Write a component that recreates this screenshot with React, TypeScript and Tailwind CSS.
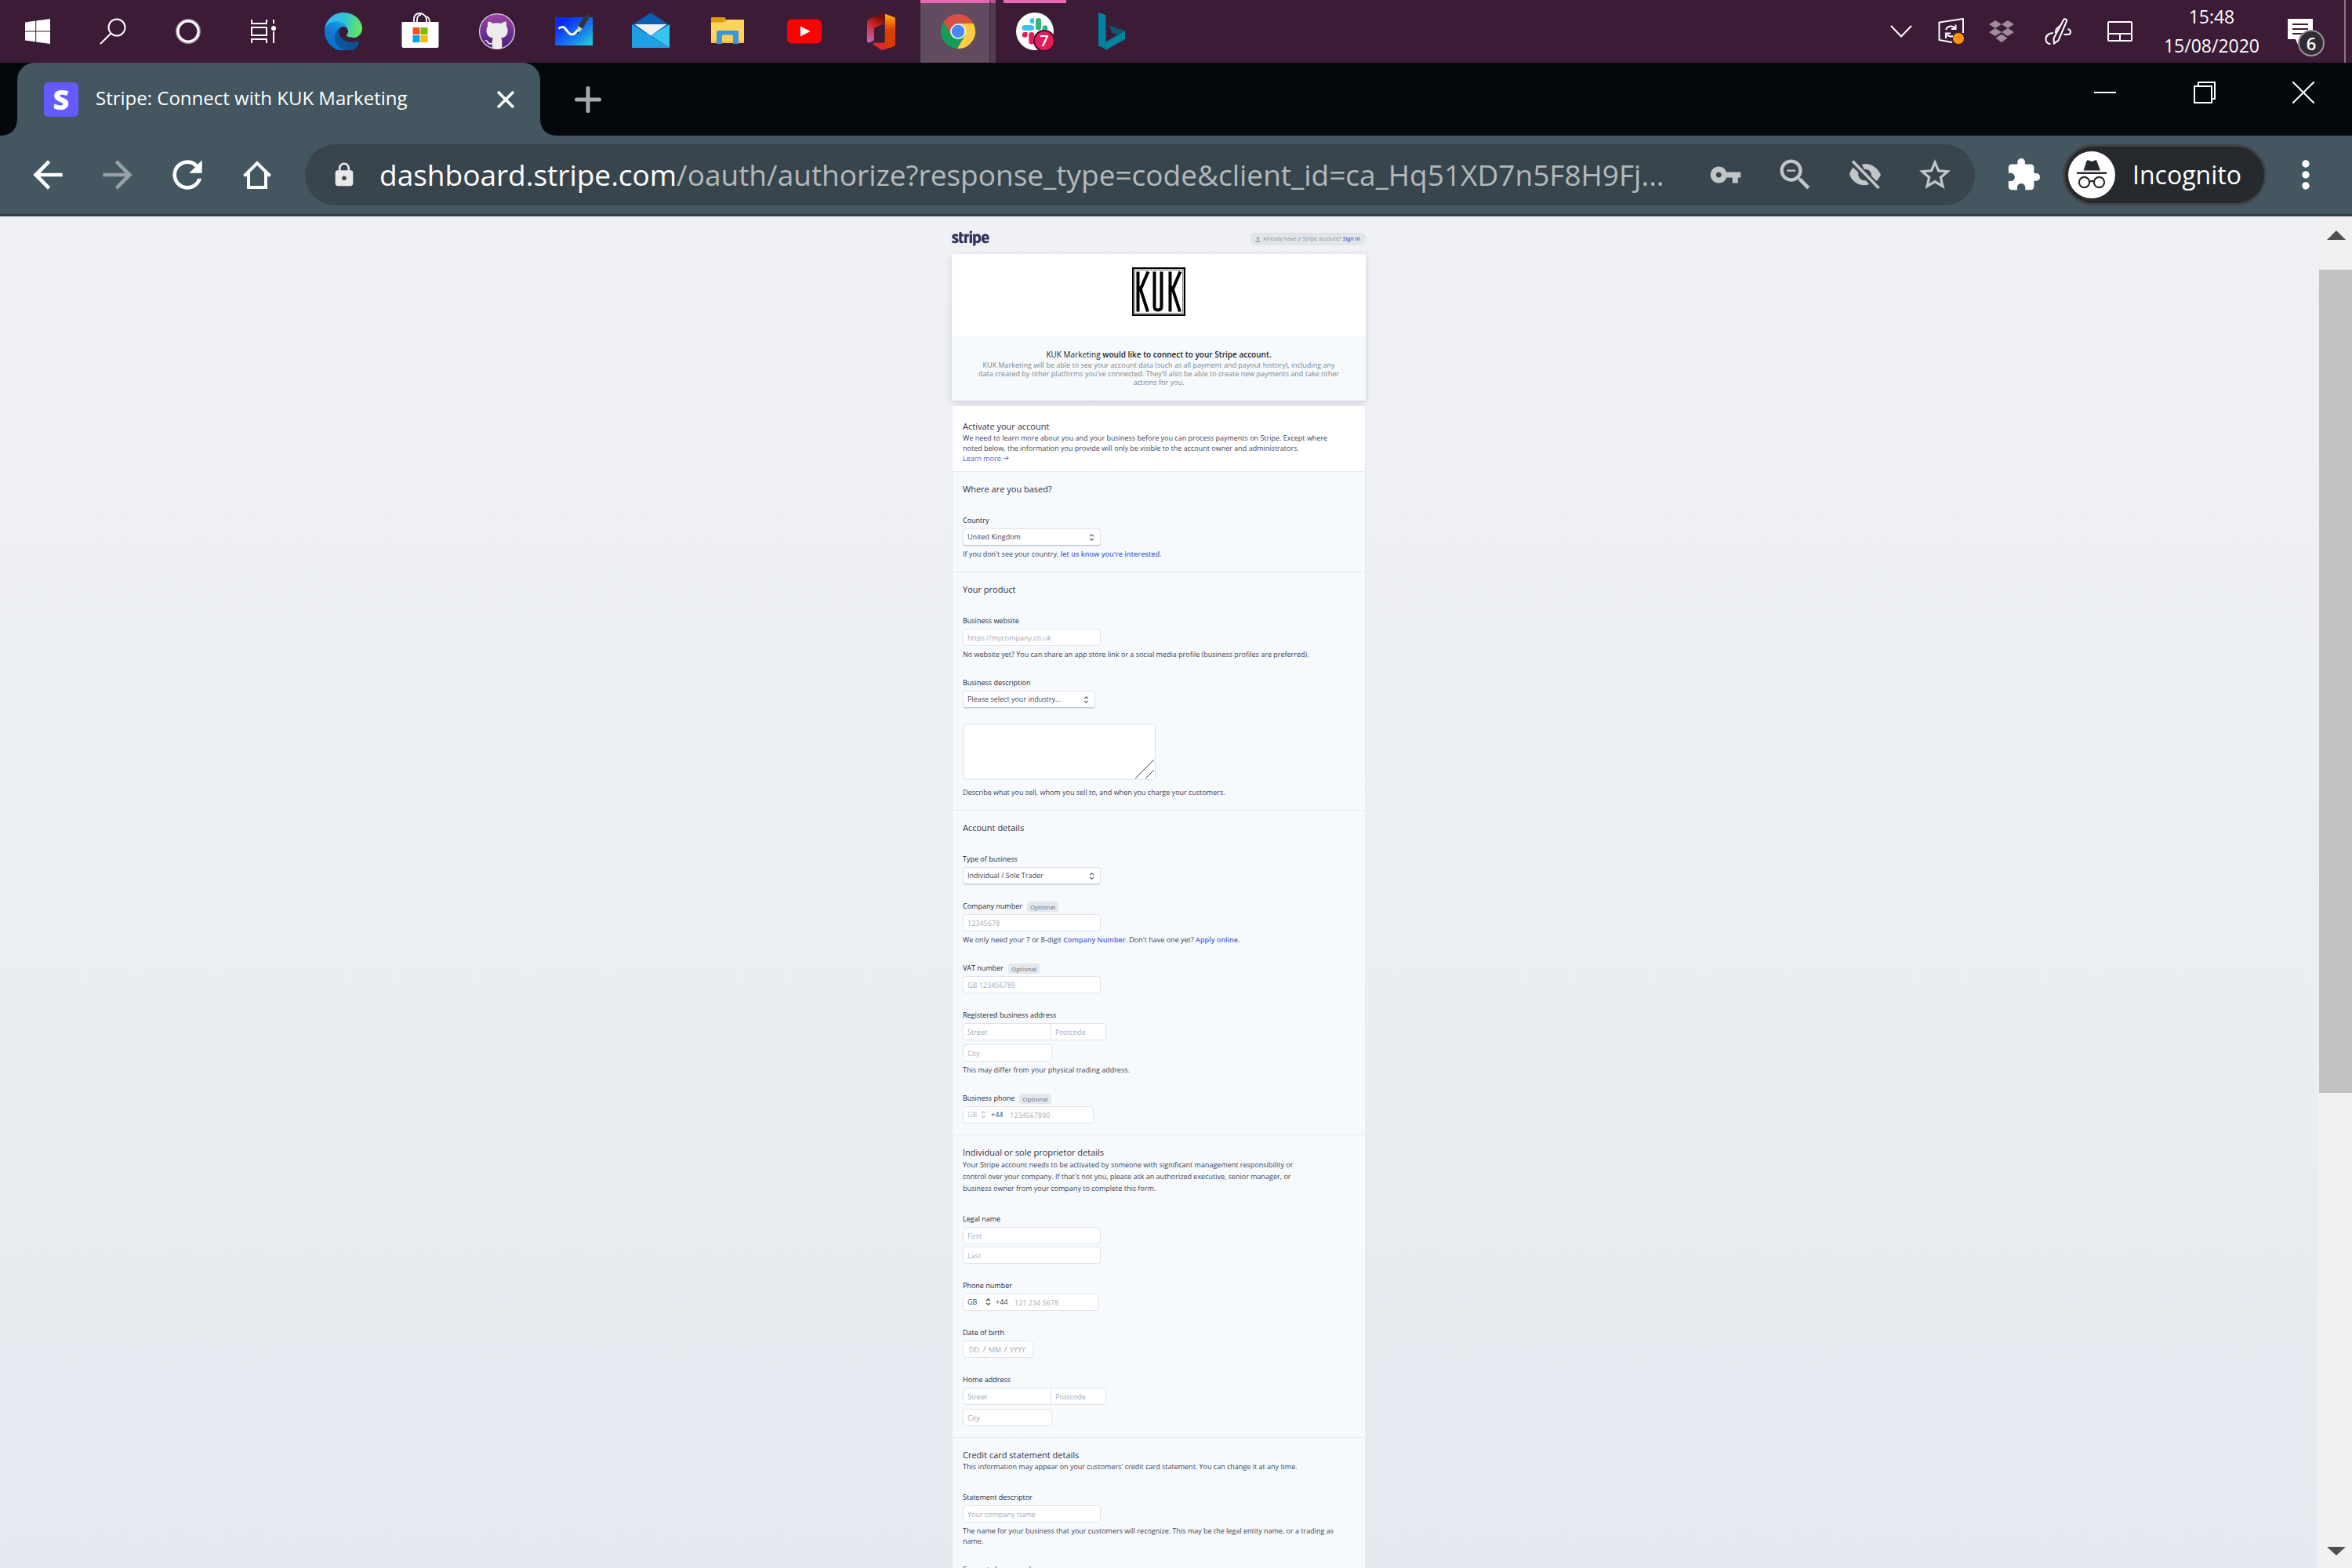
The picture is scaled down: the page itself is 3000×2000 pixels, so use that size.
import { useId, type ReactNode } from "react";
import {
  MdArrowBack,
  MdArrowForward,
  MdExtension,
  MdLock,
  MdMoreVert,
  MdRefresh,
  MdStarOutline,
  MdVpnKey,
  MdZoomOut,
} from "react-icons/md";
import { FaStripe } from "react-icons/fa";

/* ---------- Taskbar icons ---------- */

function WindowsIcon() {
  return (
    <svg width="32" height="32" viewBox="0 0 32 32" fill="#fff" aria-hidden="true">
      <path d="M0 4.5 13.2 2.6V15.4H0zM14.2 2.5 32 0V15.4H14.2zM0 16.4H13.2V29.3L0 27.4zM14.2 16.4H32V32L14.2 29.4z" />
    </svg>
  );
}

function SearchIcon() {
  return (
    <svg width="34" height="34" viewBox="0 0 34 34" fill="none" stroke="#fff" strokeWidth="2" aria-hidden="true">
      <circle cx="22" cy="12" r="10.5" />
      <path d="M14.5 19.5 1 33" />
    </svg>
  );
}

function CortanaIcon() {
  return (
    <svg width="34" height="34" viewBox="0 0 34 34" fill="none" aria-hidden="true">
      <circle cx="17" cy="17" r="14.5" stroke="#a08f9c" strokeWidth="3" />
      <circle cx="17" cy="17" r="13" stroke="#fff" strokeWidth="3.2" />
    </svg>
  );
}

function TaskViewIcon() {
  return (
    <svg width="34" height="32" viewBox="0 0 34 32" fill="none" stroke="#fff" strokeWidth="2" aria-hidden="true">
      <path d="M2 1v5h19V1M2 31v-5h19v5M2 11h19v10H2zM30 1v5M30 16v15" />
      <circle cx="30" cy="12" r="3" fill="#fff" stroke="none" />
    </svg>
  );
}

function EdgeIcon() {
  return (
    <svg width="48" height="48" viewBox="0 0 256 256" aria-hidden="true">
      <defs>
        <linearGradient id="edge-a" x1="60" y1="177" x2="240" y2="177" gradientUnits="userSpaceOnUse">
          <stop offset="0" stopColor="#0c59a4" />
          <stop offset="1" stopColor="#114a8b" />
        </linearGradient>
        <linearGradient id="edge-b" x1="150" y1="90" x2="50" y2="230" gradientUnits="userSpaceOnUse">
          <stop offset="0" stopColor="#1b9de2" />
          <stop offset="0.6" stopColor="#1077cf" />
          <stop offset="1" stopColor="#0078d4" />
        </linearGradient>
        <linearGradient id="edge-c" x1="20" y1="70" x2="245" y2="130" gradientUnits="userSpaceOnUse">
          <stop offset="0" stopColor="#35b9f7" />
          <stop offset="0.45" stopColor="#2fc5d2" />
          <stop offset="1" stopColor="#66e65a" />
        </linearGradient>
      </defs>
      <path
        fill="url(#edge-a)"
        d="M231 190.5c-3.4 1.8-6.9 3.4-10.5 4.7a101.5 101.5 0 0 1-35.5 6.4c-46.8 0-87.6-32.2-87.6-73.5 0-11.8 6.4-22.3 15.6-28.3-52 1.9-65.2 56-65.2 87.6 0 80.6 73.3 88.6 89.1 88.6 8.5 0 21.4-2.5 29-4.9l1.5-.5a128 128 0 0 0 66.5-52.7c1.2-1.9 1-5-2.9-7.4z"
      />
      <path
        fill="url(#edge-b)"
        d="M105.7 241.4a79.2 79.2 0 0 1-22.7-21.3 80.7 80.7 0 0 1 29.5-120.3c3.1-1.5 8.4-4.1 15.5-4 10.1.1 19.6 4.9 25.7 13 4 5.4 6.3 11.9 6.4 18.6 0-.2 24.5-79.6-80-79.6-44 0-80.1 41.7-80.1 78.3-.2 19.4 4 38.6 12.1 56.2 27.6 58.8 94.8 87.6 156.4 67.1-21.1 6.6-44 3.7-62.8-8z"
      />
      <path
        fill="url(#edge-c)"
        d="M152.3 148.9c-.8 1-3.3 2.5-3.3 5.7 0 2.6 1.7 5.1 4.7 7.2 14.4 10 41.5 8.7 41.6 8.7 10.7 0 21.1-2.9 30.3-8.3a61.4 61.4 0 0 0 30.4-52.9c.3-22.4-8-37.3-11.3-43.9C223.5 23.9 177.7 0 128 0 58 0 1 56.2 0 126.2c.5-36.5 36.8-66 80-66 3.5 0 23.5.3 42 10.1 16.3 8.6 24.9 18.9 30.8 29.2 6.2 10.7 7.3 24.1 7.3 29.5s-2.7 13.3-7.8 19.9z"
      />
    </svg>
  );
}

function StoreIcon() {
  return (
    <svg width="48" height="48" viewBox="0 0 48 48" aria-hidden="true">
      <path d="M16 13V8c0-4 3-7 7-7s9 3 9 8v4M20 13V9c0-4 2-6 5-6M32 5c3 1 4 3 4 8" fill="none" stroke="#fff" strokeWidth="1.8" />
      <path d="M.5 12h47v31a2 2 0 0 1-2 2h-43a2 2 0 0 1-2-2z" fill="#fff" />
      <path d="M14.5 19h9v9h-9z" fill="#f25022" />
      <path d="M24.5 19h9v9h-9z" fill="#7fba00" />
      <path d="M14.5 29h9v9h-9z" fill="#00a4ef" />
      <path d="M24.5 29h9v9h-9z" fill="#ffb900" />
    </svg>
  );
}

function GithubDesktopIcon() {
  return (
    <svg width="48" height="48" viewBox="0 0 48 48" aria-hidden="true">
      <defs>
        <linearGradient id="gh-a" x1="0" y1="0" x2="0" y2="1">
          <stop offset="0" stopColor="#9f45a5" />
          <stop offset="0.5" stopColor="#723094" />
          <stop offset="1" stopColor="#46217a" />
        </linearGradient>
      </defs>
      <circle cx="24" cy="24" r="22.4" fill="url(#gh-a)" stroke="#d8cdd9" strokeWidth="1.4" />
      <path
        fill="#ececec"
        d="M12.6 11.4c2.4-.2 4.6 1.4 6 2.4 3.4-.8 7.400-.8 10.800 0 1.400-1 3.600-2.600 6-2.400.9 2 .8 4 .4 5.800 1.600 2 2 4.600 1.700 7.200-.6 5-3.700 7.400-8.500 8.200 1 1.200 1.200 2.400 1.200 4v8.600c-4 1.600-8.400 1.600-12.400 0v-4.600c-4.600.6-5.600-1-6.800-3-.8-1.200-2-1.800-3-2.400 2.600-.8 4.200.8 5.200 2.200 1.200 1.600 2.600 1.800 4.600 1.200 0-2.400.3-4.800 1.300-6-4.800-.8-7.900-3.200-8.500-8.200-.3-2.600.1-5.200 1.700-7.200-.5-1.800-.6-3.800.3-5.800z"
      />
    </svg>
  );
}

function WhiteboardIcon() {
  return (
    <svg width="48" height="48" viewBox="0 0 48 48" aria-hidden="true">
      <defs>
        <linearGradient id="wb-a" x1="0" y1="0" x2="1" y2="1">
          <stop offset="0.2" stopColor="#0b2cff" />
          <stop offset="0.6" stopColor="#1377ee" />
          <stop offset="1" stopColor="#2ad4d6" />
        </linearGradient>
      </defs>
      <rect y="6" width="48" height="36" rx="1" fill="url(#wb-a)" />
      <path d="M4.500 20.500c2-2 6-3 8.500 0s5 8 9 7.500 4.500-4 7.500-6" fill="none" stroke="#fff" strokeWidth="3" />
      <path d="M40 .5 45 3.500 34.500 21.500l-6-3.500z" fill="#333" />
      <path d="m29 17 6 3.800-4.500 4.200-2.500 1.500z" fill="#cfcfd4" />
      <path d="m28.500 24.500 2.500.7-3.500 2.300z" fill="#333" />
    </svg>
  );
}

function MailIcon() {
  return (
    <svg width="48" height="48" viewBox="0 0 48 48" aria-hidden="true">
      <path d="M0 16 21.500 1.700a4 4 0 0 1 5 0L48 16 24 32z" fill="#0a5fb4" />
      <path d="M3.500 15h41L24 29.500z" fill="#f2f2f4" />
      <path d="M48 15v30L24 29.500z" fill="#35c5f0" />
      <path d="M0 15 48 45H0z" fill="#1f9fe4" />
    </svg>
  );
}

function ExplorerIcon() {
  return (
    <svg width="42" height="36" viewBox="0 0 42 36" aria-hidden="true">
      <path d="M1 0h15c1.500 0 2 .6 2.600 1.500L20 4v5H0V1a1 1 0 0 1 1-1z" fill="#dd9b05" />
      <path d="M18 5 20.500 3H41a1 1 0 0 1 1 1v28a1 1 0 0 1-1 1H1a1 1 0 0 1-1-1V6.500h15z" fill="#ffd35c" />
      <path d="M0 30h42v2a1 1 0 0 1-1 1H1a1 1 0 0 1-1-1z" fill="#f5c040" />
      <path d="M9 17h24a2 2 0 0 1 2 2v15h-7v-9.500a2 2 0 0 0-2-2H16a2 2 0 0 0-2 2V34H7V19a2 2 0 0 1 2-2z" fill="#3a96dd" />
    </svg>
  );
}

function YoutubeIcon() {
  return (
    <svg width="44" height="32" viewBox="0 0 44 32" aria-hidden="true">
      <rect y=".5" width="44" height="31" rx="6" fill="#f00" />
      <path d="M17 9.500v13L29.500 16z" fill="#fff" />
    </svg>
  );
}

function OfficeIcon() {
  return (
    <svg width="36" height="47" viewBox="0 0 36 47" aria-hidden="true">
      <defs>
        <linearGradient id="of-a" x1="0.6" y1="0" x2="0.2" y2="1">
          <stop offset="0.05" stopColor="#7a0c06" />
          <stop offset="0.4" stopColor="#c92323" />
          <stop offset="1" stopColor="#c763b5" />
        </linearGradient>
        <linearGradient id="of-b" x1="0" y1="0" x2="0" y2="1">
          <stop offset="0.05" stopColor="#ffa30b" />
          <stop offset="0.45" stopColor="#dd3f00" />
          <stop offset="1" stopColor="#d83b01" />
        </linearGradient>
      </defs>
      <path d="M22.500.5v13l-11.500 4c-1.200.5-2 1.500-2 3V33c0 1-.3 1.700-1.200 2.200L3.500 37C1.500 37.800 0 37 0 35V12c0-2.500 1-4 3-5L18.500.8c1.300-.5 2.700-.6 4-.3z" fill="url(#of-a)" />
      <path d="M23 .8 33.500 4.500C35.200 5.200 36 6 36 8v31c0 2-.8 2.800-2.500 3.500L22.500 46z" fill="url(#of-b)" />
      <path d="M9.500 37.500h13.500V46l-2 .7c-1.300.3-2.500.1-3.500-.5l-9-5.700c-1.800-1.300-1-3 1-3z" fill="#e2282f" />
    </svg>
  );
}

function ChromeIcon() {
  return (
    <svg width="48" height="48" viewBox="0 0 48 48" aria-hidden="true">
      <path d="M5.540 12.030A22 22 0 0 1 43.600 14H24v10l-8.660 5z" fill="#db4f40" />
      <path d="M43.600 14A22 22 0 0 1 22.860 45.970L32.660 29 24 24V14z" fill="#fecd41" />
      <path d="M22.860 45.970A22 22 0 0 1 5.540 12.030L15.340 29 24 24l8.660 5z" fill="#139d58" />
      <circle cx="24" cy="24" r="10" fill="#f1f1f1" />
      <circle cx="24" cy="24" r="8.200" fill="#4788f4" />
    </svg>
  );
}

function SlackIcon() {
  return (
    <svg width="48" height="48" viewBox="0 0 48 48" aria-hidden="true">
      <circle cx="24" cy="24" r="24" fill="#fff" />
      <path d="M23 7.500V14h-3.500a3.300 3.300 0 1 1 3.500-6.500z" fill="#36c5f0" />
      <rect x="7.500" y="16" width="15.500" height="7" rx="3.500" fill="#36c5f0" />
      <rect x="25" y="7" width="7" height="15.500" rx="3.500" fill="#2eb67d" />
      <path d="M33.500 23v-3.500a3.400 3.400 0 1 1 3.400 3.500z" fill="#2eb67d" />
      <path d="M14.500 25v3.500a3.400 3.400 0 1 1-3.400-3.500z" fill="#e01e5a" />
      <rect x="16.200" y="25" width="7" height="15.500" rx="3.500" fill="#e01e5a" />
    </svg>
  );
}

function BingIcon() {
  return (
    <svg width="34" height="48" viewBox="0 0 34 48" aria-hidden="true">
      <path d="M0 0 9.500 3.300V37.500L34 23v11L10 47.500 0 42z" fill="#0083a1" />
      <path d="M13 16 34 23.500 24 28l-6-2z" fill="#0b5a70" />
    </svg>
  );
}

/* ---------- Tray icons ---------- */

function ChevronDownIcon() {
  return (
    <svg width="28" height="16" viewBox="0 0 28 16" fill="none" stroke="#fff" strokeWidth="2" aria-hidden="true">
      <path d="m1 1 13 13.500L27 1" />
    </svg>
  );
}

function SyncIcon() {
  return (
    <svg width="34" height="34" viewBox="0 0 34 34" fill="none" stroke="#fff" strokeWidth="2" aria-hidden="true">
      <path d="M18 31 1.500 28V5.500L32 1v18" />
      <path d="M10 15c2-5.500 9-6 12-1.500M22.500 8.500v5.500H17M19 23c-3 1-6.500 0-8.500-3M10 26v-6.500h6" />
      <circle cx="26" cy="26" r="7" fill="#ff9500" stroke="none" />
    </svg>
  );
}

function DropboxIcon() {
  return (
    <svg width="32" height="28" viewBox="0 0 32 28" fill="#a08c9b" aria-hidden="true">
      <path d="m8 0 8 5-8 5-8-5zM24 0l8 5-8 5-8-5zM8 10l8 5-8 5-8-5zM24 10l8 5-8 5-8-5zM16 17.500l7.500 5L16 28l-7.500-5.500z" />
    </svg>
  );
}

function PenIcon() {
  return (
    <svg width="34" height="34" viewBox="0 0 34 34" fill="none" stroke="#fff" strokeWidth="2" aria-hidden="true">
      <path d="M24.500 1.500c2-1 4 .5 3.500 2.500L17.500 28.500 12 32.500l-.5-6.500z" />
      <path d="M21 8.500 15 14l-1.500 5M11 19.500c-5-1-9.500 3-9.500 7s2 6.500 6 6.500M24.500 21h5c2 0 3.500-1.500 3.500-3.500S31.500 14.500 29.500 14" />
    </svg>
  );
}

function TouchpadIcon() {
  return (
    <svg width="32" height="26" viewBox="0 0 32 26" fill="none" stroke="#fff" strokeWidth="2" aria-hidden="true">
      <rect x="1" y="1" width="30" height="24" rx="1" />
      <path d="M1 16h30M16 16v9" />
    </svg>
  );
}

function NotificationIcon() {
  return (
    <svg width="32" height="34" viewBox="0 0 32 34" aria-hidden="true">
      <path d="M0 0h32v26H20l-7 7-3-7H0z" fill="#fff" />
      <path d="M6 7h20M6 13h20M6 19h14" stroke="#3b1a34" strokeWidth="2" />
    </svg>
  );
}

/* ---------- Browser icons ---------- */

function HomeIcon() {
  return (
    <svg width="36" height="38" viewBox="0 0 36 38" fill="none" stroke="#fff" strokeWidth="4" aria-hidden="true">
      <path d="M1.500 20.500 18 4l16.500 16.500" />
      <path d="M7 16v19h22V16" />
    </svg>
  );
}

function EyeOffIcon() {
  return (
    <svg width="42" height="38" viewBox="0 0 42 38" fill="#c3c6c8" aria-hidden="true">
      <path d="M17 5.500c10.500-2.500 20 4 24 13.500a24 24 0 0 1-5.500 8L29 20.500c.5-5.500-4.500-9.500-9.500-8.500z" />
      <path d="M5.500 9.500 12.500 16c-1.500 6 3.500 11 9 10l5 5C16.500 35 5 29.500 1 18.500a22 22 0 0 1 4.500-9z" />
      <path d="M5 1.500 38.500 36" stroke="#c3c6c8" strokeWidth="3.600" fill="none" />
    </svg>
  );
}

function IncognitoIcon() {
  return (
    <svg width="60" height="60" viewBox="0 0 60 60" aria-hidden="true">
      <circle cx="30" cy="30" r="30" fill="#fff" />
      <path d="M23.500 12.500c.3-1 1.300-1.500 2.300-1.100L30 13l4.200-1.600c1-.4 2 .1 2.300 1.100L41 24.500H19.500z" fill="#26292d" />
      <path d="M11 26.500h38v2.600H11z" fill="#26292d" />
      <g fill="none" stroke="#26292d" strokeWidth="2.200">
        <circle cx="20.500" cy="39.500" r="6.600" />
        <circle cx="39.500" cy="39.500" r="6.600" />
        <path d="M27 39c2-1.500 4-1.500 6 0" />
      </g>
    </svg>
  );
}

function TabFlare({ className }: { className: string }) {
  return (
    <svg width="22" height="22" viewBox="0 0 22 22" className={className} aria-hidden="true">
      <path d="M22 0v22H0C14 22 22 14 22 0z" fill="#445660" />
    </svg>
  );
}

/* ---------- Taskbar ---------- */

function TaskbarButton({ label, wide, children }: { label: string; wide?: boolean; children: ReactNode }) {
  return (
    <button
      type="button"
      aria-label={label}
      className={
        wide
          ? "relative flex h-20 w-[98px] items-center justify-center"
          : "flex h-20 w-24 items-center justify-center"
      }
    >
      {children}
    </button>
  );
}

function Taskbar() {
  return (
    <header className="flex h-20 shrink-0 items-center bg-[#3b1b36]">
      <div className="flex">
        <TaskbarButton label="Start"><WindowsIcon /></TaskbarButton>
        <TaskbarButton label="Search"><SearchIcon /></TaskbarButton>
        <TaskbarButton label="Cortana"><CortanaIcon /></TaskbarButton>
        <TaskbarButton label="Task view"><TaskViewIcon /></TaskbarButton>
      </div>
      <div className="ml-[5px] flex flex-1">
        <TaskbarButton wide label="Edge"><EdgeIcon /></TaskbarButton>
        <TaskbarButton wide label="Store"><StoreIcon /></TaskbarButton>
        <TaskbarButton wide label="GitHub Desktop"><GithubDesktopIcon /></TaskbarButton>
        <TaskbarButton wide label="Whiteboard"><WhiteboardIcon /></TaskbarButton>
        <TaskbarButton wide label="Mail"><MailIcon /></TaskbarButton>
        <TaskbarButton wide label="File Explorer"><ExplorerIcon /></TaskbarButton>
        <TaskbarButton wide label="YouTube"><YoutubeIcon /></TaskbarButton>
        <TaskbarButton wide label="Office"><OfficeIcon /></TaskbarButton>
        <TaskbarButton wide label="Chrome">
          <span className="absolute inset-x-px inset-y-0 border-t-4 border-[#e56ab3] bg-[#624a5f]" />
          <span className="absolute inset-y-0 right-px w-2 border-t-4 border-l-2 border-t-[#b85391] border-l-[#493344] bg-[#533d50]" />
          <span className="relative"><ChromeIcon /></span>
        </TaskbarButton>
        <TaskbarButton wide label="Slack">
          <span className="absolute inset-x-[9px] top-0 h-1 bg-[#e56ab3]" />
          <SlackIcon />
          <span className="absolute top-[38px] left-[47px] flex size-7 items-center justify-center rounded-full border-2 border-[#4a0a26] bg-[#e01e5a] text-[20px] leading-none font-semibold text-white">
            7
          </span>
        </TaskbarButton>
        <TaskbarButton wide label="Bing"><BingIcon /></TaskbarButton>
      </div>
      <div className="flex items-center">
        <button type="button" aria-label="Show hidden icons" className="mr-[33px]"><ChevronDownIcon /></button>
        <button type="button" aria-label="Updates" className="mr-[31px]"><SyncIcon /></button>
        <button type="button" aria-label="Dropbox" className="mr-[39px]"><DropboxIcon /></button>
        <button type="button" aria-label="Windows Ink" className="mr-[46px]"><PenIcon /></button>
        <button type="button" aria-label="Touchpad"><TouchpadIcon /></button>
      </div>
      <div className="ml-10 text-center text-[23px] leading-[37px] text-white">
        <div>15:48</div>
        <div>15/08/2020</div>
      </div>
      <button type="button" aria-label="Notifications" className="relative mr-[40px] ml-[36px] pt-0.5">
        <NotificationIcon />
        <span className="absolute top-4 left-[13px] flex size-[34px] items-center justify-center rounded-full border-2 border-[#9b9198] bg-[#322b31] text-[22px] leading-none font-semibold text-white">
          6
        </span>
      </button>
      <div className="mr-2 h-20 w-0.5 bg-[#8a7586]" />
    </header>
  );
}

/* ---------- Browser chrome ---------- */

function TabStrip() {
  return (
    <div className="flex h-[93px] shrink-0 items-center bg-[#03080b] pl-[22px]">
      <div className="relative flex h-full w-[667px] items-center rounded-t-[22px] bg-[#445660] pr-[33px] pl-[34px]">
        <TabFlare className="absolute bottom-0 -left-[22px]" />
        <TabFlare className="absolute -right-[22px] bottom-0 -scale-x-100" />
        <span className="flex size-11 items-center justify-center rounded-md bg-[#635bff] text-[36px] leading-none font-extrabold text-white">
          S
        </span>
        <span className="ml-[22px] flex-1 pb-1 text-[24px] text-white">Stripe: Connect with KUK Marketing</span>
        <button type="button" aria-label="Close tab">
          <svg width="22" height="22" viewBox="0 0 22 22" stroke="#fff" strokeWidth="3.600" aria-hidden="true">
            <path d="m1 1 20 20M21 1 1 21" />
          </svg>
        </button>
      </div>
      <button type="button" aria-label="New tab" className="ml-[44px]">
        <svg width="34" height="34" viewBox="0 0 34 34" stroke="#a7a9ab" strokeWidth="5" strokeLinecap="round" aria-hidden="true">
          <path d="M17 2.500v29M2.500 17h29" />
        </svg>
      </button>
      <div className="ml-auto flex h-full pb-[17px]">
        <button type="button" aria-label="Minimise" className="flex w-[127px] items-center justify-center">
          <svg width="28" height="28" viewBox="0 0 28 28" stroke="#fff" strokeWidth="2" aria-hidden="true">
            <path d="M0 14h28" />
          </svg>
        </button>
        <button type="button" aria-label="Restore" className="flex w-[127px] items-center justify-center">
          <svg width="28" height="28" viewBox="0 0 28 28" fill="none" stroke="#fff" strokeWidth="2" aria-hidden="true">
            <path d="M1 6h22v21H1zM6 6V1h21v21h-4" />
          </svg>
        </button>
        <button type="button" aria-label="Close" className="flex w-[125px] items-center justify-center">
          <svg width="28" height="28" viewBox="0 0 28 28" stroke="#fff" strokeWidth="2" aria-hidden="true">
            <path d="m0 0 28 28M28 0 0 28" />
          </svg>
        </button>
      </div>
    </div>
  );
}

function ToolButton({ label, children }: { label: string; children: ReactNode }) {
  return (
    <button type="button" aria-label={label} className="flex h-14 w-[89px] items-center justify-center">
      {children}
    </button>
  );
}

function Toolbar() {
  return (
    <div className="flex h-[103px] shrink-0 items-center border-b-[3px] border-[#2f3d44] bg-[#445660] pl-4 text-white">
      <ToolButton label="Back"><MdArrowBack size={56} /></ToolButton>
      <ToolButton label="Forward"><MdArrowForward size={56} className="text-[#98a1a6]" /></ToolButton>
      <ToolButton label="Reload"><MdRefresh size={56} /></ToolButton>
      <ToolButton label="Home"><HomeIcon /></ToolButton>
      <div className="ml-[17px] flex h-[78px] flex-1 items-center rounded-full bg-[#39454c] pr-[7px] pl-[33px] text-[#c3c6c8]">
        <MdLock size={34} className="shrink-0 text-[#e8e8e8]" />
        <div className="ml-7 w-0 flex-1 text-[37px] whitespace-nowrap text-[#b5b9bb]">
          <span className="text-white">dashboard.stripe.com</span>
          /oauth/authorize?response_type=code&amp;client_id=ca_Hq51XD7n5F8H9Fj...
        </div>
        <ToolButton label="Saved passwords"><MdVpnKey size={42} /></ToolButton>
        <ToolButton label="Zoom out"><MdZoomOut size={52} /></ToolButton>
        <ToolButton label="Third-party cookies blocked"><EyeOffIcon /></ToolButton>
        <ToolButton label="Bookmark this page"><MdStarOutline size={48} /></ToolButton>
      </div>
      <div className="mr-[6px] ml-[17px]">
        <ToolButton label="Extensions"><MdExtension size={46} /></ToolButton>
      </div>
      <div className="flex h-[78px] w-[260px] items-center rounded-full border-[3px] border-[#414447] bg-[#26292d] pl-1 text-[32px]">
        <IncognitoIcon />
        <span className="ml-[22px]">Incognito</span>
      </div>
      <div className="mr-[15px] ml-[5px]">
        <ToolButton label="Menu"><MdMoreVert size={56} /></ToolButton>
      </div>
    </div>
  );
}

function Scrollbar() {
  return (
    <div className="flex w-11 shrink-0 flex-col items-end bg-[#f1f1f1]">
      <svg width="24" height="12" viewBox="0 0 24 12" className="mt-[18px] mr-2 shrink-0" aria-hidden="true">
        <path d="M12 0l12 12H0z" fill="#505050" />
      </svg>
      <div className="mt-[38px] h-[1050px] w-[42px] shrink-0 bg-[#c1c1c1]" />
      <svg width="24" height="11" viewBox="0 0 24 11" className="mt-auto mr-2 mb-4 shrink-0" aria-hidden="true">
        <path d="M0 0h24L12 11z" fill="#505050" />
      </svg>
    </div>
  );
}

/* ---------- Form parts ---------- */

function SelectArrows({ className }: { className: string }) {
  return (
    <svg width="7" height="9" viewBox="0 0 7 9" fill="none" stroke="currentColor" strokeWidth="1.200" className={className} aria-hidden="true">
      <path d="M1 3 3.500.8 6 3M1 6l2.500 2.200L6 6" />
    </svg>
  );
}

function Section({ title, intro, children }: { title: string; intro?: ReactNode; children: ReactNode }) {
  return (
    <section className="border-t border-[#e6eaee] px-[13px] pt-[14px] pb-[14px]">
      <h2 className="text-[11px] leading-[16px] text-[#2a2f45]">{title}</h2>
      {intro}
      <div className="mt-[26px] flex flex-col gap-[22px]">{children}</div>
    </section>
  );
}

function Help({ children }: { children: ReactNode }) {
  return <p className="mt-1 mb-0.5 text-[9px] leading-[13px] text-[#3c4257]">{children}</p>;
}

function Field({
  label,
  htmlFor,
  optional,
  children,
}: {
  label: string;
  htmlFor: string;
  optional?: boolean;
  children: ReactNode;
}) {
  return (
    <div>
      <div className="mb-1 flex h-3 items-center gap-[6px]">
        <label htmlFor={htmlFor} className="text-[9px] leading-[12px] text-[#1a1f36]">
          {label}
        </label>
        {optional && (
          <span className="rounded-[3px] bg-[#e3e8ee] px-1 text-[8px] leading-[13px] text-[#697386]">Optional</span>
        )}
      </div>
      {children}
    </div>
  );
}

const boxBase = "block h-[22px] rounded border border-[#e0e4e9] bg-white px-[5px] text-[9px] text-[#3c4257] placeholder:text-[#a3acb9] placeholder:opacity-100";

function TextField({
  label,
  placeholder,
  optional,
  help,
}: {
  label: string;
  placeholder: string;
  optional?: boolean;
  help?: ReactNode;
}) {
  const id = useId();
  return (
    <Field label={label} htmlFor={id} optional={optional}>
      <input id={id} type="text" placeholder={placeholder} className={`${boxBase} w-[176px]`} />
      {help && <Help>{help}</Help>}
    </Field>
  );
}

function SelectBox({ id, value, wide }: { id: string; value: string; wide?: boolean }) {
  return (
    <div className={wide ? "relative w-[176px]" : "relative w-[169px]"}>
      <select
        id={id}
        className="block h-[22px] w-full appearance-none rounded border border-[#dfe3e8] border-b-[#bfc4ca] bg-white px-[5px] text-[9px] text-[#3c4257] shadow-[0_1px_1px_rgba(60,66,87,0.12)]"
      >
        <option>{value}</option>
      </select>
      <SelectArrows className="pointer-events-none absolute top-[7px] right-2 text-[#5f6678]" />
    </div>
  );
}

function AddressField({ label, help }: { label: string; help?: string }) {
  const id = useId();
  return (
    <Field label={label} htmlFor={id}>
      <div className="flex">
        <input id={id} type="text" placeholder="Street" className={`${boxBase} w-[113px] rounded-r-none`} />
        <input type="text" aria-label="Postcode" placeholder="Postcode" className={`${boxBase} -ml-px w-[71px] rounded-l-none`} />
      </div>
      <input type="text" aria-label="City" placeholder="City" className={`${boxBase} mt-[5px] w-[114px]`} />
      {help && <Help>{help}</Help>}
    </Field>
  );
}

function PhoneField({
  label,
  placeholder,
  optional,
}: {
  label: string;
  placeholder: string;
  optional?: boolean;
}) {
  const id = useId();
  return (
    <Field label={label} htmlFor={id} optional={optional}>
      <div className={`${boxBase} ${optional ? "w-[167px]" : "w-[173px]"}`}>
        <div className="flex h-5 items-center">
          <div className={optional ? "relative w-6 text-[#b3bac5]" : "relative w-[30px] text-[#3c4257]"}>
            <select aria-label={`${label} country`} className="block w-full appearance-none text-[9px] leading-5">
              <option>GB</option>
            </select>
            <SelectArrows className="pointer-events-none absolute top-[5px] right-0" />
          </div>
          <span className="ml-[6px] w-6 leading-5">+44</span>
          <input
            id={id}
            type="tel"
            placeholder={placeholder}
            className="h-5 min-w-0 flex-1 placeholder:text-[#a3acb9] placeholder:opacity-100"
          />
        </div>
      </div>
    </Field>
  );
}

function DateField() {
  const id = useId();
  const part = "h-5 placeholder:text-[#a3acb9] placeholder:opacity-100";
  return (
    <Field label="Date of birth" htmlFor={id}>
      <div className={`${boxBase} w-[90px]`}>
        <div className="flex h-5 items-center">
          <input id={id} type="text" placeholder="DD" className={`${part} ml-0.5 w-[18px]`} />
          <span className="w-[7px] text-[#8792a2]">/</span>
          <input type="text" aria-label="Month" placeholder="MM" className={`${part} w-5`} />
          <span className="w-[7px] text-[#8792a2]">/</span>
          <input type="text" aria-label="Year" placeholder="YYYY" className={`${part} w-6`} />
        </div>
      </div>
    </Field>
  );
}

function Link({ children }: { children: ReactNode }) {
  return (
    <a href="#" className="font-semibold text-[#5469d4]">
      {children}
    </a>
  );
}

/* ---------- Page ---------- */

function KukLogo() {
  return (
    <svg width="68" height="62" viewBox="0 0 68 62" role="img" aria-label="KUK" fill="none" stroke="#000">
      <rect x="1" y="1" width="66" height="60" strokeWidth="2.400" />
      <rect x="3.500" y="3.500" width="61" height="55" stroke="#888" strokeWidth="1" />
      <g strokeWidth="4">
        <line x1="7.500" y1="5.500" x2="7.500" y2="56.500" />
        <line x1="20.500" y1="5.500" x2="9.500" y2="31" />
        <line x1="9.500" y1="24" x2="20" y2="56.500" />
        <path d="M28.500 5.500V50q0 4.500 4.500 4.500t4.500-4.500V5.500" />
        <line x1="48.500" y1="5.500" x2="48.500" y2="56.500" />
        <line x1="61.500" y1="5.500" x2="50.500" y2="31" />
        <line x1="50.500" y1="24" x2="61" y2="56.500" />
      </g>
    </svg>
  );
}

function StripePage() {
  const country = useId();
  const industry = useId();
  const business = useId();
  return (
    <main className="flex min-w-0 flex-1 justify-center overflow-hidden bg-linear-to-b from-[#f0f1f5] via-[#ebeef2] to-[#e6e9ef]">
      <div className="w-[528px] shrink-0">
        <div className="flex h-12 items-center justify-between pt-2">
          <FaStripe className="h-[38px] w-12 text-[#32325d]" aria-label="stripe" />
          <div className="mt-0.5 flex h-4 items-center gap-[3px] rounded-full bg-[#e2e5e9] px-[7px] text-[7px] leading-4 text-[#8f96a1] shadow-[inset_0_1px_0_#d9dce1]">
            <svg width="7" height="7" viewBox="0 0 8 8" fill="#a6abb4" aria-hidden="true">
              <circle cx="4" cy="2.200" r="2.200" />
              <path d="M0 8c0-2 1.500-3 4-3s4 1 4 3z" />
            </svg>
            <span>
              Already have a Stripe account?{" "}
              <a href="#" className="font-semibold text-[#5469d4]">Sign in</a>
            </span>
          </div>
        </div>

        <div className="overflow-hidden rounded-[3px] bg-white shadow-[0_3px_8px_rgba(50,50,93,0.16)]">
          <div className="flex h-[104px] justify-center pt-[17px]">
            <KukLogo />
          </div>
          <div className="bg-[#f6fafd] px-6 pt-[17px] pb-[18px] text-center">
            <p className="text-[10px] leading-[14px] text-[#1a1f26]">
              KUK Marketing <strong className="font-semibold">would like to connect to your Stripe account.</strong>
            </p>
            <p className="pt-px text-[9px] leading-[11px] text-[#7b858c]">
              KUK Marketing will be able to see your account data (such as all payment and payout history), including any
              <br />
              data created by other platforms you've connected. They'll also be able to create new payments and take other
              <br />
              actions for you.
            </p>
          </div>
        </div>

        <div className="mt-[7px] rounded-t-[3px] border-x border-[#e8ecf0] bg-[#f6fafd]">
          <div className="rounded-t-[3px] bg-white px-[13px] pt-[18px] pb-[10px] text-[9px] leading-[13px] text-[#3c4257]">
            <h1 className="text-[11px] leading-[16px] text-[#2a2f45]">Activate your account</h1>
            <p>
              We need to learn more about you and your business before you can process payments on Stripe. Except where
              <br />
              noted below, the information you provide will only be visible to the account owner and administrators.
            </p>
            <a href="#" className="flex items-center gap-[3px] text-[#5469d4]">
              Learn more
              <svg width="7" height="7" viewBox="0 0 7 7" fill="none" stroke="currentColor" strokeWidth="1" aria-hidden="true">
                <path d="M0 3.500h6M3.500.8 6.200 3.500 3.500 6.200" />
              </svg>
            </a>
          </div>

          <Section title="Where are you based?">
            <Field label="Country" htmlFor={country}>
              <SelectBox id={country} value="United Kingdom" wide />
              <Help>
                If you don't see your country, <Link>let us know you're interested</Link>.
              </Help>
            </Field>
          </Section>

          <Section title="Your product">
            <TextField
              label="Business website"
              placeholder="https://mycompany.co.uk"
              help="No website yet? You can share an app store link or a social media profile (business profiles are preferred)."
            />
            <Field label="Business description" htmlFor={industry}>
              <SelectBox id={industry} value="Please select your industry..." />
              <div className="relative mt-5 mb-[9px] w-[246px]">
                <textarea
                  aria-label="Business description details"
                  className="block h-[72px] w-full resize-none rounded border border-[#dde1e6] bg-white p-[5px] text-[9px]"
                />
                <svg width="24" height="24" viewBox="0 0 24 24" stroke="#444" strokeWidth="1" className="pointer-events-none absolute right-0.5 bottom-0.5" aria-hidden="true">
                  <path d="M0 24 24 0M13 24 24 13" />
                </svg>
              </div>
              <p className="mb-0.5 text-[9px] leading-[13px] text-[#3c4257]">
                Describe what you sell, whom you sell to, and when you charge your customers.
              </p>
            </Field>
          </Section>

          <Section title="Account details">
            <Field label="Type of business" htmlFor={business}>
              <SelectBox id={business} value="Individual / Sole Trader" wide />
            </Field>
            <TextField
              label="Company number"
              optional
              placeholder="12345678"
              help={
                <>
                  We only need your 7 or 8-digit <Link>Company Number</Link>. Don't have one yet? <Link>Apply online</Link>.
                </>
              }
            />
            <TextField label="VAT number" optional placeholder="GB 123456789" />
            <AddressField label="Registered business address" help="This may differ from your physical trading address." />
            <PhoneField label="Business phone" optional placeholder="1234567890" />
          </Section>

          <Section
            title="Individual or sole proprietor details"
            intro={
              <p className="text-[9px] leading-[15px] text-[#3c4257]">
                Your Stripe account needs to be activated by someone with significant management responsibility or
                <br />
                control over your company. If that's not you, please ask an authorized executive, senior manager, or
                <br />
                business owner from your company to complete this form.
              </p>
            }
          >
            <div className="flex flex-col gap-[3px]">
              <TextField label="Legal name" placeholder="First" />
              <input type="text" aria-label="Last name" placeholder="Last" className={`${boxBase} w-[176px]`} />
            </div>
            <PhoneField label="Phone number" placeholder="121 234 5678" />
            <DateField />
            <AddressField label="Home address" />
          </Section>

          <Section
            title="Credit card statement details"
            intro={
              <p className="text-[9px] leading-[14px] text-[#3c4257]">
                This information may appear on your customers' credit card statement. You can change it at any time.
              </p>
            }
          >
            <TextField
              label="Statement descriptor"
              placeholder="Your company name"
              help={
                <>
                  The name for your business that your customers will recognize. This may be the legal entity name, or a trading as
                  <br />
                  name.
                </>
              }
            />
            <TextField label="Support phone number" placeholder="121 234 5678" />
          </Section>
        </div>
      </div>
    </main>
  );
}

export default function App() {
  return (
    <div className="flex h-screen flex-col overflow-hidden font-['Open_Sans','Noto_Sans',sans-serif]">
      <Taskbar />
      <TabStrip />
      <Toolbar />
      <div className="flex min-h-0 flex-1">
        <StripePage />
        <Scrollbar />
      </div>
    </div>
  );
}
